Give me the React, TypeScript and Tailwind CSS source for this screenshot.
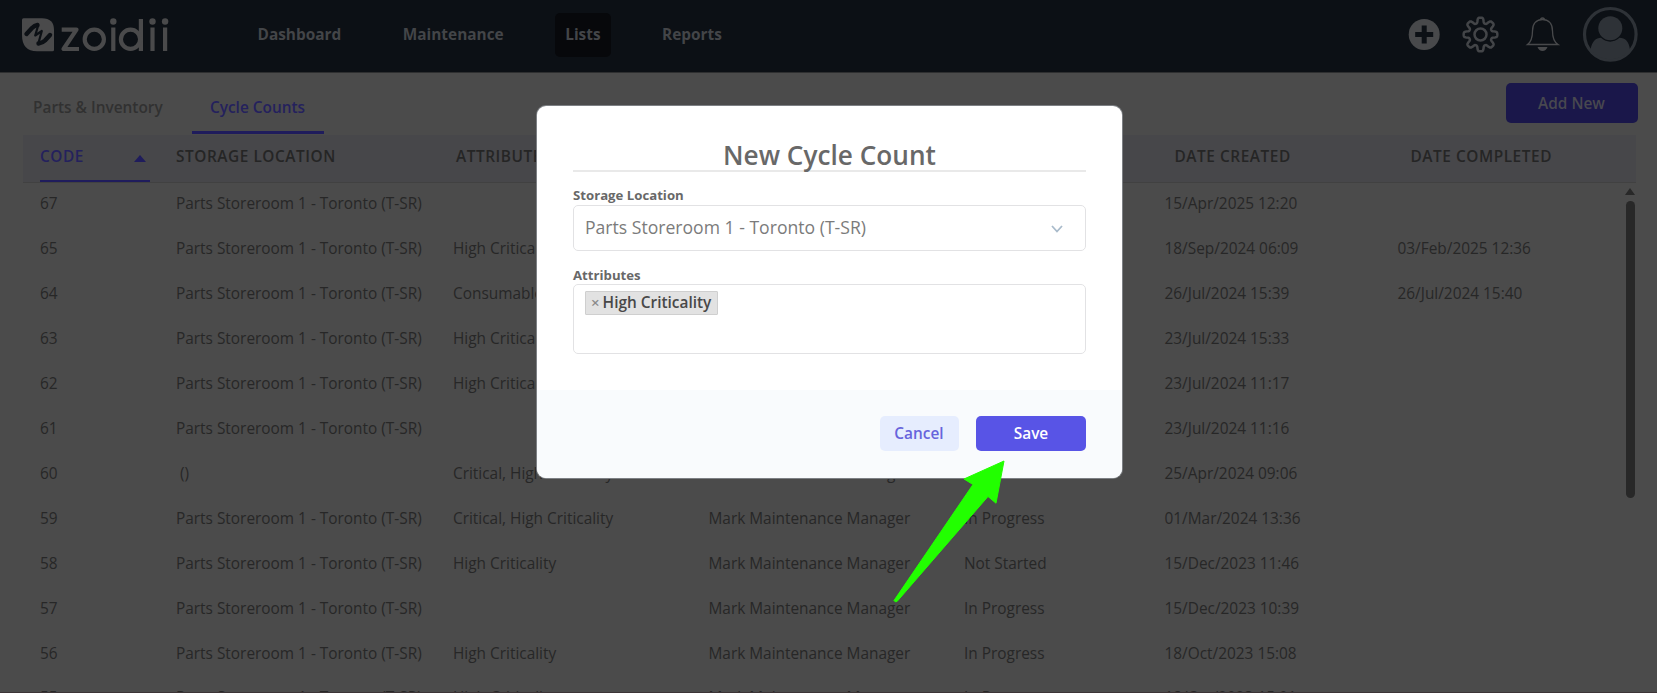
import React from "react";

const rows = [
  ["67", "Parts Storeroom 1 - Toronto (T-SR)", "", "", "", "15/Apr/2025 12:20", ""],
  ["65", "Parts Storeroom 1 - Toronto (T-SR)", "High Criticality", "", "", "18/Sep/2024 06:09", "03/Feb/2025 12:36"],
  ["64", "Parts Storeroom 1 - Toronto (T-SR)", "Consumable", "", "", "26/Jul/2024 15:39", "26/Jul/2024 15:40"],
  ["63", "Parts Storeroom 1 - Toronto (T-SR)", "High Criticality", "", "", "23/Jul/2024 15:33", ""],
  ["62", "Parts Storeroom 1 - Toronto (T-SR)", "High Criticality", "", "", "23/Jul/2024 11:17", ""],
  ["61", "Parts Storeroom 1 - Toronto (T-SR)", "", "", "", "23/Jul/2024 11:16", ""],
  ["60", "\u00a0()", "Critical, High Criticality", "Mark Maintenance Manager", "", "25/Apr/2024 09:06", ""],
  ["59", "Parts Storeroom 1 - Toronto (T-SR)", "Critical, High Criticality", "Mark Maintenance Manager", "In Progress", "01/Mar/2024 13:36", ""],
  ["58", "Parts Storeroom 1 - Toronto (T-SR)", "High Criticality", "Mark Maintenance Manager", "Not Started", "15/Dec/2023 11:46", ""],
  ["57", "Parts Storeroom 1 - Toronto (T-SR)", "", "Mark Maintenance Manager", "In Progress", "15/Dec/2023 10:39", ""],
  ["56", "Parts Storeroom 1 - Toronto (T-SR)", "High Criticality", "Mark Maintenance Manager", "In Progress", "18/Oct/2023 15:08", ""],
  ["55", "Parts Storeroom 1 - Toronto (T-SR)", "High Criticality", "Mark Maintenance Manager", "In Progress", "18/Oct/2023 15:01", ""],
];

const columns = "grid grid-cols-[136px_277px_255.5px_255.5px_200.5px_233px_1fr]";

function Logo() {
  return (
    <svg className="h-[36px] w-[148px] shrink-0" viewBox="0 0 148 36" fill="none">
      <path d="M1.500 1.200H20Q32 1.200 32 13V32.700Q32 34.200 30.500 34.200H15Q0 34.200 0 18V2.700Q0 1.200 1.500 1.200Z" fill="#4a4a4b" />
      <g stroke="#0c1015" strokeLinecap="round" strokeLinejoin="round">
        <path d="M4.500 17L10 11Q12.500 8.500 15.500 8M16.500 26.500Q20.500 26 23 23.500L28 18" strokeWidth="4.400" />
        <path d="M16 9L13.200 18.500L19.800 14L16.500 26" strokeWidth="2.200" />
      </g>
      <g stroke="#4a4a4b" strokeWidth="4.200">
        <path d="M39.700 12.600H54.500L41.500 32H57" strokeLinejoin="round" />
        <circle cx="72.300" cy="22.300" r="9.600" />
        <path d="M91.300 10.500V34M118.900 2V34M130.500 10.500V34M143.100 10.500V34" />
        <circle cx="108.500" cy="22.300" r="9.600" />
      </g>
      <g fill="#4a4a4b">
        <circle cx="91.300" cy="4.500" r="3.200" />
        <circle cx="130.500" cy="4.500" r="3.200" />
        <circle cx="143.100" cy="4.500" r="3.200" />
      </g>
    </svg>
  );
}

function gearPath(cx: number, cy: number) {
  const pts: string[] = [];
  for (let i = 0; i < 160; i++) {
    const a = (i / 160) * Math.PI * 2;
    const w = Math.cos(a * 8);
    const r = 14.2 + 2.7 * Math.tanh(w * 2 + 0.3);
    pts.push(`${(cx + r * Math.sin(a)).toFixed(2)} ${(cy - r * Math.cos(a)).toFixed(2)}`);
  }
  return `M${pts.join("L")}Z`;
}

function Header() {
  return (
    <header className="flex h-[73px] items-start border-b border-[#2e2f30] bg-[#0c1015] pl-[22px] pr-[19px] text-[15.4px] font-bold text-[#434548]">
      <div className="flex h-[72px] w-[225.5px] items-center pb-[3px]">
        <Logo />
      </div>
      <nav className="flex h-[70px] items-center gap-[41.5px]">
        <span className="px-[10px]">Dashboard</span>
        <span className="px-[10px]">Maintenance</span>
        <span className="flex h-[44px] items-center rounded-[5px] bg-[#07080b] px-[10px]">Lists</span>
        <span className="px-[10px]">Reports</span>
      </nav>
      <svg className="ml-auto h-[70px] w-[230px]" viewBox="1408 0 230 70" fill="none">
        <circle cx="1424.200" cy="34.500" r="15.500" fill="#48494b" />
        <path d="M1424.200 25.500V43.500M1415.200 34.500H1433.200" stroke="#0c1015" strokeWidth="5" />
        <path d={gearPath(1480.5, 34.5)} stroke="#434548" strokeWidth="2.500" strokeLinejoin="round" />
        <circle cx="1480.500" cy="34.500" r="6" stroke="#434548" strokeWidth="2.500" />
        <path d="M1527.500 44.500C1531 42 1532.500 38 1532.500 31C1532.500 23 1537 19.500 1542.500 19.500S1552.500 23 1552.500 31C1552.500 38 1554 42 1558 44.500Z" stroke="#48494b" strokeWidth="1.300" />
        <path d="M1540.500 19Q1542.500 17 1544.500 19" stroke="#48494b" strokeWidth="1.500" />
        <path d="M1537.500 47H1547.500Q1546 51 1542.500 51T1537.500 47Z" fill="#48494b" />
        <circle cx="1610.300" cy="34.300" r="25.800" stroke="#2e3237" strokeWidth="3.200" />
        <circle cx="1610.300" cy="28.200" r="12" fill="#2e3237" />
        <path d="M1590.500 50C1592 41 1596 38 1601 37.800Q1610 45.500 1619.500 37.800C1625 38 1629 41 1630 50A25.500 25.500 0 0 1 1590.500 50Z" fill="#2e3237" />
      </svg>
    </header>
  );
}

function Tabs() {
  return (
    <div className="flex h-[62px] items-start pl-[23px] pr-[19px] text-[15.4px] font-semibold">
      <div className="flex h-[62px] w-[149px] justify-start whitespace-nowrap pl-[10px] pt-[24px] leading-[22px] text-[#313131]">Parts &amp; Inventory</div>
      <div className="ml-[20px] flex h-[61px] w-[132px] justify-center border-b-[3px] border-[#1f1c5c] pr-[1px] pt-[24px] leading-[22px] text-[#24215d]">Cycle Counts</div>
      <button className="ml-auto mt-[10px] h-[40px] w-[132px] rounded-[5px] bg-[#1a174a] pr-[1px] pt-px font-semibold text-[#48484f]">Add New</button>
    </div>
  );
}

function Table() {
  return (
    <div className="flex min-h-0 flex-1 flex-col pl-[23px] pr-[21px]">
      <div className={`${columns} h-[48px] shrink-0 border-b border-[#414141] bg-[#47474a] pl-[17px] text-[15.4px] font-semibold tracking-[0.55px] text-[#252525]`}>
        <div className="mr-[26px] flex items-center justify-between border-b-2 border-[#1f1c5c] pb-px pr-[4px] text-[#24215d]">
          CODE
          <svg className="mt-[3px] h-[7px] w-[12px]" viewBox="0 0 12 7"><path d="M0 7L6 0L12 7Z" fill="#1f1c5c" /></svg>
        </div>
        <div className="flex items-center pb-[3px]">STORAGE LOCATION</div>
        <div className="flex items-center pb-[3px] pl-[3px]">ATTRIBUTES</div>
        <div className="flex items-center pb-[3px] pl-[3px]" />
        <div className="flex items-center pb-[3px] pl-[3px]" />
        <div className="flex items-center pb-[3px] pl-[10px]">DATE CREATED</div>
        <div className="flex items-center pb-[3px] pl-[13px]">DATE COMPLETED</div>
      </div>
      <div className="flex min-h-0 flex-1 overflow-hidden">
        <div className="min-w-0 flex-1 pl-[17px] text-[15.4px] text-[#272727]">
          {rows.map((r) => (
            <div key={r[0]} className={`${columns} h-[45px] items-center whitespace-nowrap pb-[4px] last:-mt-px`}>
              {r.map((c, i) => <span key={i}>{c}</span>)}
            </div>
          ))}
        </div>
        <div className="mr-[1px] flex w-[10px] shrink-0 flex-col items-center gap-[6px] pt-[5px]">
          <svg className="h-[7px] w-[10px] shrink-0" viewBox="0 0 10 7"><path d="M0 7L5 0L10 7Z" fill="#282828" /></svg>
          <div className="h-[297px] w-[9px] shrink-0 rounded-full bg-[#282828]" />
        </div>
      </div>
    </div>
  );
}

function Modal() {
  return (
    <section className="absolute left-[537px] top-[106px] flex h-[372px] w-[585px] flex-col overflow-hidden rounded-[9px] bg-white shadow-[0_0_0_1px_#7d8084]">
      <div className="flex h-[284px] flex-col px-[36px]">
        <h1 className="h-[66px] border-b-2 border-[#e9e9e9] pt-[31px] text-center text-[26.2px] font-semibold leading-[36px] text-[#686868]">New Cycle Count</h1>
        <label className="mt-[14px] text-[13.2px] font-bold leading-[18px] text-[#686868]">Storage Location</label>
        <div className="mt-px flex h-[46px] shrink-0 items-center justify-between rounded-[5px] border border-[#e2e2e4] pb-px pl-[11px] pr-[22px] text-[17.6px] text-[#7b7b7b]">
          Parts Storeroom 1 - Toronto (T-SR)
          <svg className="mt-[2px] h-[8px] w-[12px]" viewBox="0 0 12 8" fill="none"><path d="M1 1L6 6.500L11 1" stroke="#a9bbcb" strokeWidth="1.800" /></svg>
        </div>
        <label className="mt-[15px] text-[13.2px] font-bold leading-[18px] text-[#686868]">Attributes</label>
        <div className="h-[70px] shrink-0 rounded-[5px] border border-[#e2e2e4] pl-[11px] pt-[6px]">
          <span className="flex h-[24px] w-[133px] items-center gap-[3px] whitespace-nowrap rounded-[1px] border border-[#cfcfcf] bg-[#e2e2e2] pb-px pl-[5px] text-[15.4px] font-semibold text-[#484848]">
            <span className="text-[15px] text-[#8a8a8a]">×</span>High Criticality
          </span>
        </div>
      </div>
      <footer className="flex flex-1 items-start justify-end gap-[17px] bg-[#f9fbfd] pr-[36px] pt-[26px] text-[15.4px] font-semibold">
        <button className="h-[35px] w-[79px] rounded-[5px] bg-[#e6edfe] pr-px text-[#6764dc]">Cancel</button>
        <button className="h-[35px] w-[110px] rounded-[5px] bg-[#5854e6] text-white">Save</button>
      </footer>
    </section>
  );
}

export default function App() {
  return (
    <main className="relative flex h-[693px] w-[1657px] flex-col overflow-hidden border-b border-[#3c3436] bg-[#4b4b4b] font-['Open_Sans',sans-serif]">
      <Header />
      <Tabs />
      <Table />
      <Modal />
      <svg className="absolute left-[890px] top-[457px] h-[150px] w-[120px]" viewBox="890 457 120 150">
        <path d="M1004 461L964 479L973 484.500L894 600.500Q895 602.500 897 601.500L988 496.500L996 503.200Z" fill="#22ff00" stroke="#22ff00" strokeWidth="1" strokeLinejoin="round" />
      </svg>
    </main>
  );
}
